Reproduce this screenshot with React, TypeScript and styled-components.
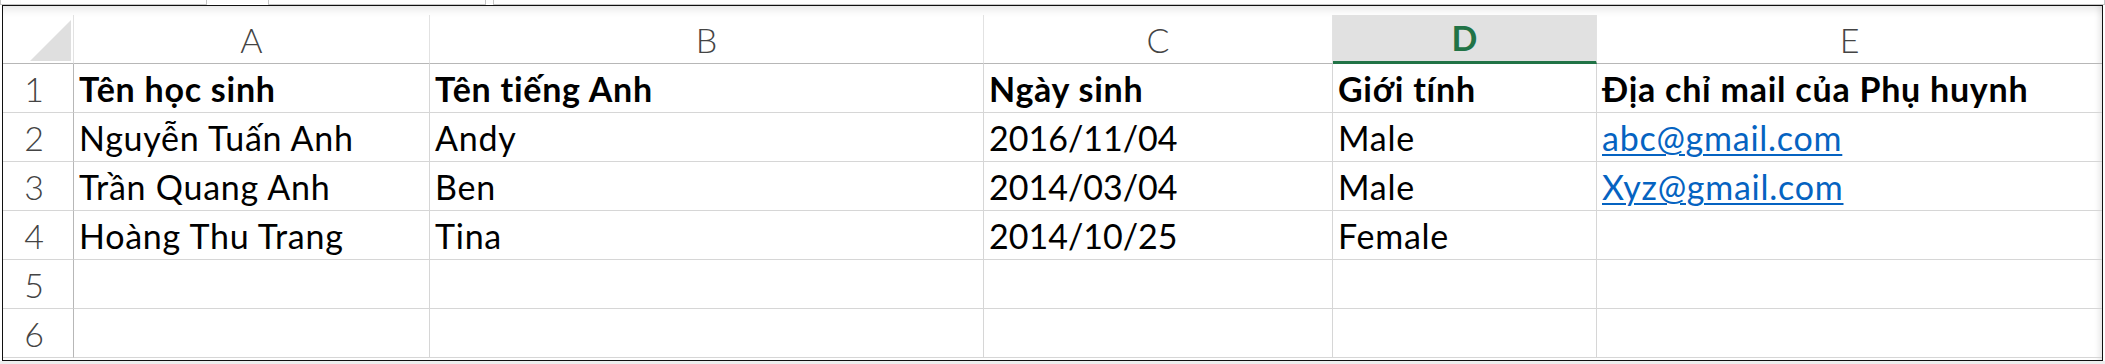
import styled, { createGlobalStyle } from 'styled-components'

const GlobalStyle = createGlobalStyle`
  html, body {
    margin: 0;
    padding: 0;
    background: #ffffff;
  }
  body {
    font-family: Lato, "Noto Sans", sans-serif;
  }
`

const Page = styled.div`
  width: 2105px;
  height: 364px;
  overflow: hidden;
  background: #ffffff;
`

const TopBar = styled.div`
  display: flex;
  height: 5px;
`

const BarBox = styled.div<{ $width?: number; $open?: boolean }>`
  box-sizing: border-box;
  height: 5px;
  width: ${p => (p.$width ? `${p.$width}px` : 'auto')};
  flex: ${p => (p.$width ? 'none' : '1')};
  border: 1px solid #c6c6c6;
  border-top: none;
  ${p => (p.$open ? 'border: none;' : '')}
`

const Sheet = styled.div`
  box-sizing: border-box;
  margin-left: 2px;
  width: 2101px;
  height: 356px;
  border: 1px solid #111111;
  padding-top: 9px;
  background: #ffffff;
  box-shadow: inset 0 10px 8px -6px rgba(0, 0, 0, 0.09), inset -7px 0 6px -5px rgba(0, 0, 0, 0.12);
`

const Grid = styled.div`
  display: grid;
  grid-template-columns: 71px 356px 554px 349px 264px 505px;
  grid-template-rows: repeat(7, 49px);
`

const CornerCell = styled.div`
  box-sizing: border-box;
  display: flex;
  justify-content: flex-end;
  align-items: flex-end;
  padding: 0 2px 2px 0;
  border-right: 1px solid #e2e2e2;
  border-bottom: 1px solid #b7b7b7;
`

const CornerTriangle = styled.div`
  width: 41px;
  height: 41px;
  background: #dfdfdf;
  clip-path: polygon(100% 0, 100% 100%, 0 100%);
`

const ColHeader = styled.div<{ $selected?: boolean; $last?: boolean }>`
  box-sizing: border-box;
  display: flex;
  justify-content: center;
  align-items: flex-end;
  padding-bottom: 6px;
  font-size: 34px;
  line-height: 34px;
  font-weight: ${p => (p.$selected ? 700 : 300)};
  color: ${p => (p.$selected ? '#217346' : '#444444')};
  background: ${p => (p.$selected ? '#e1e1e1' : 'transparent')};
  border-right: ${p => (p.$last ? 'none' : '1px solid #e2e2e2')};
  border-bottom: ${p => (p.$selected ? '3px solid #217346' : '1px solid #b7b7b7')};
`

const RowHeader = styled.div`
  box-sizing: border-box;
  display: flex;
  justify-content: center;
  align-items: flex-end;
  padding: 0 8px 6px 0;
  font-size: 34px;
  line-height: 34px;
  font-weight: 300;
  color: #444444;
  border-right: 1px solid #b7b7b7;
  border-bottom: 1px solid #d6d6d6;
`

const Cell = styled.div<{ $bold?: boolean; $last?: boolean; $numeric?: boolean }>`
  box-sizing: border-box;
  display: flex;
  align-items: flex-end;
  padding: 0 0 6px 5px;
  font-size: 34px;
  line-height: 34px;
  letter-spacing: ${p => (p.$numeric ? '0' : '0.75px')};
  font-weight: ${p => (p.$bold ? 700 : 400)};
  color: #000000;
  white-space: nowrap;
  border-right: ${p => (p.$last ? 'none' : '1px solid #d6d6d6')};
  border-bottom: 1px solid #d6d6d6;
`

const MailLink = styled.a`
  color: #0563c1;
  text-decoration: underline;
  text-decoration-thickness: 2px;
  text-underline-offset: 3px;
`

const BottomStrip = styled.div`
  height: 3px;
  background: #eeeeee;
`

const columns = ['A', 'B', 'C', 'D', 'E']

type CellValue = string | { mail: string }

const rows: CellValue[][] = [
  ['Tên học sinh', 'Tên tiếng Anh', 'Ngày sinh', 'Giới tính', 'Địa chỉ mail của Phụ huynh'],
  ['Nguyễn Tuấn Anh', 'Andy', '2016/11/04', 'Male', { mail: 'abc@gmail.com' }],
  ['Trần Quang Anh', 'Ben', '2014/03/04', 'Male', { mail: 'Xyz@gmail.com' }],
  ['Hoàng Thu Trang', 'Tina', '2014/10/25', 'Female', ''],
  ['', '', '', '', ''],
  ['', '', '', '', ''],
]

function Row({ index, row }: { index: number; row: CellValue[] }): JSX.Element {
  return (
    <>
      <RowHeader>{index + 1}</RowHeader>
      {row.map((value, i) => (
        <Cell
          key={i}
          $bold={index === 0}
          $last={i === row.length - 1}
          $numeric={typeof value === 'string' && /^[\d/]+$/.test(value)}
        >
          {typeof value === 'string' ? value : <MailLink href={`mailto:${value.mail}`}>{value.mail}</MailLink>}
        </Cell>
      ))}
    </>
  )
}

function App(): JSX.Element {
  return (
    <Page>
      <GlobalStyle />
      <TopBar>
        <BarBox $width={207} />
        <BarBox $width={61} $open />
        <BarBox $width={218} />
        <BarBox $width={7} $open />
        <BarBox />
      </TopBar>
      <Sheet>
        <Grid>
          <CornerCell>
            <CornerTriangle />
          </CornerCell>
          {columns.map((c, i) => (
            <ColHeader key={c} $selected={c === 'D'} $last={i === columns.length - 1}>
              {c}
            </ColHeader>
          ))}
          {rows.map((row, r) => (
            <Row key={r} index={r} row={row} />
          ))}
        </Grid>
      </Sheet>
      <BottomStrip />
    </Page>
  )
}

export default App
